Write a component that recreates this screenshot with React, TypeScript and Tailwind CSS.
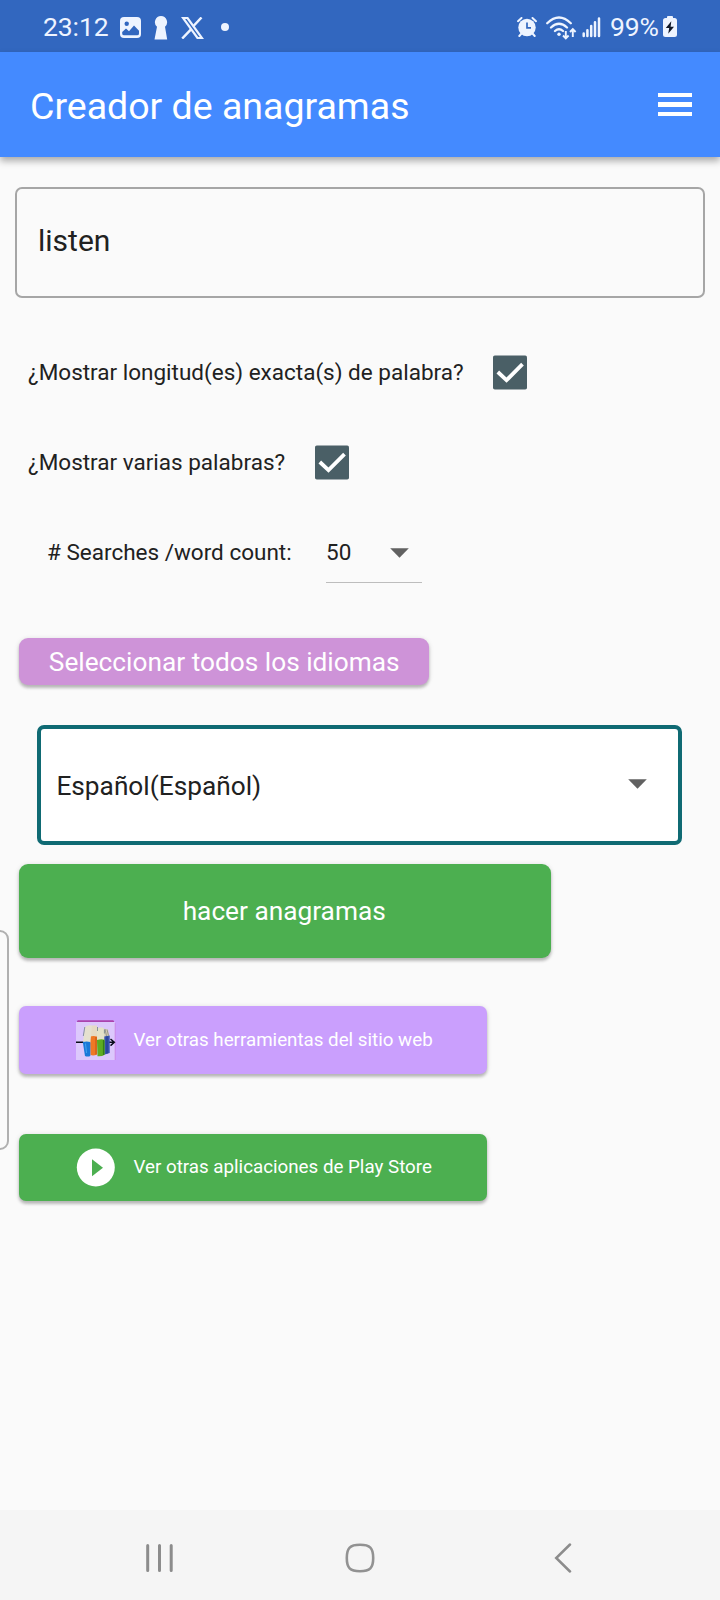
import type { ReactNode } from "react";

const raised = "shadow-[0_3px_3px_rgba(0,0,0,0.2),0_1px_5px_rgba(0,0,0,0.15)]";

function StatusBar() {
  return (
    <div className="flex h-[52px] shrink-0 items-center bg-[#3267bf] pl-[43px] text-[#eef4ff]">
      <span className="w-[77px] whitespace-nowrap pt-[2px] text-[26.5px] leading-[52px] tracking-[-0.1px]">23:12</span>
      <svg width="21" height="21" viewBox="0 0 21 21" className="mt-[2px]" aria-hidden="true">
        <rect width="21" height="21" rx="4" fill="currentColor" />
        <circle cx="6.7" cy="6.8" r="2.2" fill="#3267bf" />
        <path d="M2.2 16.3V15L6 11.6l3 2.6 5-5.6 5 5.2v2.600q0 1.900-1.900 1.900H4.100q-1.900 0-1.900-1.900Z" fill="#3267bf" />
      </svg>
      <svg width="14" height="24" viewBox="0 0 14 24" className="ml-[13px] mt-[3px]" aria-hidden="true">
        <path d="M7 0a6.2 6.2 0 0 1 4 10.8L13.2 23.4H.5L3 10.8A6.2 6.2 0 0 1 7 0Z" fill="currentColor" />
      </svg>
      <svg width="23" height="22" viewBox="0 0 23 22" className="ml-[13px] mt-[3px]" fill="none" stroke="currentColor" aria-hidden="true">
        <path d="M2 1h4.500l14.500 20h-4.500Z" strokeWidth="2.200" />
        <path d="M20.500 .5l-8 8.500M10 12.400 1.200 21.500" strokeWidth="2.500" />
      </svg>
      <span className="ml-[17px] mt-[2px] size-[8px] rounded-full bg-[#eef4ff]" />
      <svg width="20" height="20" viewBox="0 0 20 20" className="ml-[288px] mt-[2px]" fill="none" stroke="currentColor" aria-hidden="true">
        <circle cx="10" cy="10.500" r="8.700" fill="currentColor" stroke="none" />
        <path d="M1 4.200 4.500 1M19 4.200 15.500 1M4.500 16.500 2.300 19M15.500 16.500l2.200 2.500" strokeWidth="2" strokeLinecap="round" />
        <path d="M10 5.500v5.300h4" stroke="#3267bf" strokeWidth="1.700" />
      </svg>
      <svg width="31" height="24" viewBox="0 0 31 24" className="ml-[9px] mt-[3px]" fill="none" stroke="currentColor" aria-hidden="true">
        <path d="M1.200 7.200q11.800-11.500 23.600 0M5 11.500q8-7.500 16 0M9 15q4-3.500 8 0" strokeWidth="2.300" strokeLinecap="round" />
        <circle cx="13" cy="18.300" r="1.700" fill="currentColor" stroke="none" />
        <path d="M19.800 15v7M17 19.500l2.800 2.800 2.800-2.800M26.800 21v-7.500M24 16l2.800-2.800L29.600 16" strokeWidth="1.900" />
      </svg>
      <svg width="19" height="21" viewBox="0 0 19 21" className="ml-[5px] mt-[2px]" fill="none" stroke="currentColor" strokeWidth="2.500" strokeLinecap="round" aria-hidden="true">
        <path d="M1.700 16.500V19M5.400 13.200V19M9.200 9V19M13 5.200V19M17 1.500V19" />
      </svg>
      <span className="ml-[9px] w-[51px] whitespace-nowrap pt-[2px] text-[26.500px] leading-[52px] tracking-[-0.200px]">99%</span>
      <svg width="14" height="22" viewBox="0 0 14 22" className="ml-[2px] mt-[2px]" aria-hidden="true">
        <path d="M4 2V1q0-1 1-1h4q1 0 1 1v1h1.500Q14 2 14 4.500v14Q14 21 11.500 21h-9Q0 21 0 18.500v-14Q0 2 2.500 2Z" fill="currentColor" />
        <path d="M8.300 5.200 2.800 12h3.400l-1 5.700 5.800-7H7.600Z" fill="#111827" />
      </svg>
    </div>
  );
}

function Header() {
  return (
    <header className="relative flex h-[105px] shrink-0 items-center justify-between bg-[#448aff] pl-[30px] pr-[28px] text-white shadow-[0_4px_7px_rgba(0,0,0,0.32)]">
      <h1 className="whitespace-nowrap pt-[3px] text-[37.500px] leading-[44px]">Creador de anagramas</h1>
      <button type="button" aria-label="Menu" className="flex w-[34px] flex-col gap-[5px]">
        <span className="h-[4px] bg-white" />
        <span className="h-[5px] bg-white" />
        <span className="h-[4px] bg-white" />
      </button>
    </header>
  );
}

function CheckRow({ label }: { label: string }) {
  return (
    <label className="flex h-[90px] items-center gap-[29.500px] pl-[28px]">
      <span className="whitespace-nowrap text-[22.500px] leading-[28px]">{label}</span>
      <svg width="34" height="35" viewBox="0 0 34 35" aria-hidden="true">
        <rect y=".5" width="34" height="34" rx="1.800" fill="#4a5f66" />
        <path d="M4.800 17 13.500 25.200 29.500 9.200" fill="none" stroke="#fff" strokeWidth="3.800" />
      </svg>
    </label>
  );
}

function Triangle({ className }: { className: string }) {
  return (
    <svg width="19" height="10" viewBox="0 0 19 10" className={className} aria-hidden="true">
      <path d="M.2.300h18.600L9.500 9.700Z" fill="#616161" />
    </svg>
  );
}

function BooksIcon() {
  return (
    <svg width="40" height="40" viewBox="0 0 40 40" aria-hidden="true">
      <path d="M0 2h39v38H0Z" fill="#dcc8fc" />
      <path d="M1 1.900Q1 .3 2 .3h35q1 0 1.200 1.600Z" fill="#aa43ad" />
      <path d="M39.200 3v37" stroke="#cb8ce5" />
      <path d="M0 22.300h8M32 22.300h6M34.500 19l3.800 3.300-3.800 3.300" fill="none" stroke="#080b18" strokeWidth="1.500" />
      <path d="M27 8.500 32 9.500 33.500 17H27Z" fill="#d5cfb8" />
      <path d="M29 9l1.500 7M31 9.500l1.500 6" stroke="#837f75" strokeWidth=".7" />
      <path d="M28 16.500 33.700 15.500V33L28 34.800Z" fill="#3552b0" />
      <path d="M31 16.500V33.500" stroke="#263f8e" strokeWidth="1.200" />
      <path d="M14.500 6.500 16 5.500h5l.5 12h-7Z" fill="#e5dac4" />
      <path d="M14 16.500q3.500-1.200 7 0V34.500q-3.500 1.500-6.500.5Z" fill="#ef7824" />
      <path d="M20 17v17.500" stroke="#c85a18" strokeWidth="1.200" />
      <path d="M21 9 23 7.500h4l1.300 2V21H21Z" fill="#e5e2c9" />
      <path d="M21 20q4-1.200 7.700-.3v15q-3 2-7.200 1.500Z" fill="#5dac20" />
      <path d="M27.500 20v15" stroke="#368014" strokeWidth="1.200" />
      <path d="M8.800 7Q12 4.500 16 5.500L14.300 23H7Z" fill="#e5e0cf" />
      <path d="M6.800 22q4-.8 7.500 0V36q-2.800 1-5.300 0Z" fill="#1979d8" />
      <path d="M8.800 7 7.300 16M21.500 7v4M28.400 9.500v4" fill="none" stroke="#5f7480" strokeWidth=".7" />
      <path d="M9.500 23.500 10.500 33" stroke="#42a4ef" />
    </svg>
  );
}

function LinkButton({ icon, label, className }: { icon: ReactNode; label: string; className: string }) {
  return (
    <button type="button" className={`flex w-[468.400px] items-center gap-[17.500px] rounded-[7px] pl-[57px] text-white ${raised} ${className}`}>
      {icon}
      <span className="whitespace-nowrap text-[18.750px] leading-[24px]">{label}</span>
    </button>
  );
}

export default function App() {
  return (
    <div className="relative flex h-[1600px] w-[720px] flex-col overflow-hidden bg-[#fafafa] font-[Roboto,sans-serif] text-[#212121]">
      <StatusBar />
      <Header />
      <main className="flex flex-1 flex-col">
        <div className="mx-[15px] mt-[30px] flex h-[111px] items-center rounded-[7px] border-2 border-[#a6a6a6] pb-[4px] pl-[21px] text-[30px] leading-[36px]">
          listen
        </div>
        <div className="mt-[29px]">
          <CheckRow label="¿Mostrar longitud(es) exacta(s) de palabra?" />
          <CheckRow label="¿Mostrar varias palabras?" />
        </div>
        <div className="flex h-[90px] items-center pl-[47px] text-[22.500px] leading-[28px]">
          <span className="w-[279px] whitespace-nowrap"># Searches /word count:</span>
          <div className="flex h-[62px] w-[96px] items-center border-b border-[#bdbdbd]">
            <span className="w-[64px]">50</span>
            <Triangle className="mt-[2px]" />
          </div>
        </div>
        <button type="button" className={`ml-[19px] mt-[41px] h-[47px] w-[410.400px] whitespace-nowrap rounded-[9px] bg-[#ce93d8] pt-[1px] text-[26.250px] leading-[46px] text-white ${raised}`}>
          Seleccionar todos los idiomas
        </button>
        <div className="ml-[37.400px] mt-[40px] flex h-[120px] w-[645px] items-center justify-between rounded-[7px] border-4 border-[#0f6a73] bg-white pl-[15px] pr-[31px] text-[26.250px]">
          <span className="pt-[2px] leading-[32px]">Español(Español)</span>
          <Triangle className="mb-[2px]" />
        </div>
        <button type="button" className={`ml-[19px] mt-[19px] h-[94px] w-[532.400px] rounded-[9px] bg-[#4caf50] pr-[2px] pt-[2px] text-[26.250px] text-white ${raised}`}>
          hacer anagramas
        </button>
        <div className="ml-[19px] mt-[48px] flex flex-col gap-[60px]">
          <LinkButton className="h-[68px] bg-[#ca9ffd]" icon={<BooksIcon />} label="Ver otras herramientas del sitio web" />
          <LinkButton
            className="h-[67px] bg-[#4caf50] pb-[1px]"
            icon={
              <svg width="40" height="40" viewBox="0 0 40 40" aria-hidden="true">
                <circle cx="19.800" cy="20.500" r="19" fill="#fff" />
                <path d="M16 12.300v17L27 20.800Z" fill="#4caf50" />
              </svg>
            }
            label="Ver otras aplicaciones de Play Store"
          />
        </div>
      </main>
      <div className="absolute left-[-20px] top-[930px] h-[220px] w-[28.500px] rounded-[9px] border-2 border-[#b0b0b0]" />
      <nav className="flex h-[90px] shrink-0 items-center bg-[#f5f5f5] pl-[145px] pt-[5px]">
        <svg width="29" height="30" viewBox="0 0 29 30" fill="none" stroke="#8c8c8c" strokeWidth="3" strokeLinecap="round" aria-label="Recents">
          <path d="M2.700 2.500v25M14.500 2.500v25M26.200 2.500v25" />
        </svg>
        <svg width="30" height="30" viewBox="0 0 30 30" className="ml-[171px]" fill="none" stroke="#929292" strokeWidth="2.600" aria-label="Home">
          <path d="M15 1.800C25 1.800 28.200 5 28.200 15S25 28.200 15 28.200 1.800 25 1.800 15 5 1.800 15 1.800Z" />
        </svg>
        <svg width="18" height="30" viewBox="0 0 18 30" className="ml-[179px]" fill="none" stroke="#8c8c8c" strokeWidth="2.500" strokeLinecap="round" aria-label="Back">
          <path d="M16 1.500 2.200 15 16 28.500" />
        </svg>
      </nav>
    </div>
  );
}
